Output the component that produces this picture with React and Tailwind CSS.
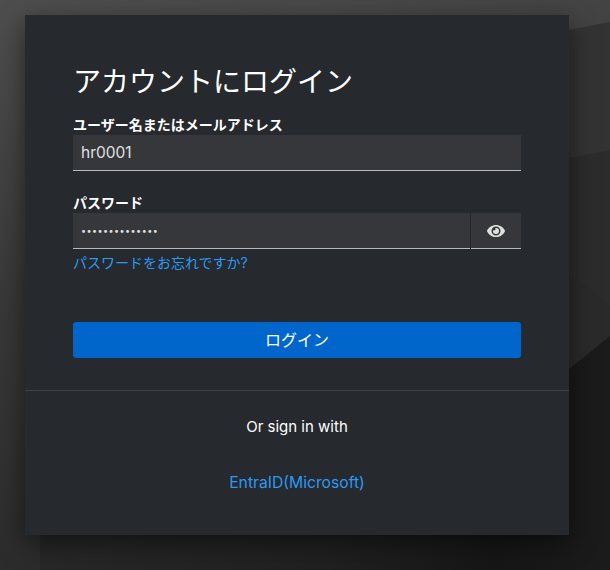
import { FaEye } from "react-icons/fa";

const FONT = "font-['Inter','Noto_Sans_CJK_JP',sans-serif]";

export default function App() {
  return (
    <div className={`relative h-[570px] w-[610px] overflow-hidden bg-[#232323] text-white ${FONT}`}>
      {/* Background facets */}
      <svg className="absolute inset-0" width="610" height="570" viewBox="0 0 610 570">
        <defs>
          <linearGradient id="bg" x1="0" y1="0" x2="0.25" y2="1">
            <stop offset="0" stopColor="#4e4e4e" />
            <stop offset="0.5" stopColor="#383838" />
            <stop offset="1" stopColor="#2a2a2a" />
          </linearGradient>
          <linearGradient id="low" gradientUnits="userSpaceOnUse" x1="40" y1="0" x2="610" y2="0">
            <stop offset="0" stopColor="#272727" />
            <stop offset="0.5" stopColor="#202020" />
            <stop offset="0.8" stopColor="#161616" />
            <stop offset="1" stopColor="#1b1b1b" />
          </linearGradient>
        </defs>
        <rect width="610" height="570" fill="url(#bg)" />
        <polygon points="569,30 610,22 610,150 569,158" fill="#333333" />
        <polygon points="569,158 610,150 610,305 569,272" fill="#2c2c2c" />
        <polygon points="569,272 610,305 610,336 569,369" fill="#2a2a2a" />
        <polygon points="569,369 610,336 610,570 40,570 40,500 569,500" fill="url(#low)" />
      </svg>

      <main className="relative ml-[25px] mt-[15px] h-[520px] w-[544px] bg-[#26292d] shadow-[0_8px_24px_rgba(0,0,0,0.5)]">
        <div className="px-12 pt-[49px]">
          <h1 className="text-[28px] leading-9 text-white">アカウントにログイン</h1>

          <label className="mt-[15px] block text-sm font-bold leading-5 text-white">
            ユーザー名またはメールアドレス
          </label>
          <input
            readOnly
            value="hr0001"
            className="block h-9 w-full border-b border-[#b8b8b8] bg-[#36373b] px-2 text-[15.5px] text-[#e0e0e0] outline-none"
          />

          <label className="mt-[22px] block text-sm font-bold leading-5 text-white">
            パスワード
          </label>
          <div className="flex gap-px">
            <input
              readOnly
              type="password"
              value="12345678901234"
              className="block h-9 min-w-0 flex-1 border-b border-[#b8b8b8] bg-[#36373b] px-2 text-[9px] tracking-[0.45px] text-[#e0e0e0] outline-none"
            />
            <button className="flex h-9 w-[50px] items-center justify-center border-b border-[#b8b8b8] bg-[#36373b] text-[#e0e0e0]">
              <FaEye className="h-4 w-[18px]" />
            </button>
          </div>
          <a className="mt-[3px] block text-sm leading-[21px] text-[#2b9af3]">パスワードをお忘れですか?</a>

          <button className="mt-[49px] block h-9 w-full rounded-[3px] bg-[#06c] text-base text-white">
            ログイン
          </button>
        </div>

        <div className="mt-8 border-t border-[#3f4145] pt-6 text-center">
          <p className="text-[15px] leading-6 text-white">Or sign in with</p>
          <a className="mt-8 block text-[15.7px] leading-6 text-[#2b9af3]">EntraID(Microsoft)</a>
        </div>
      </main>
    </div>
  );
}
